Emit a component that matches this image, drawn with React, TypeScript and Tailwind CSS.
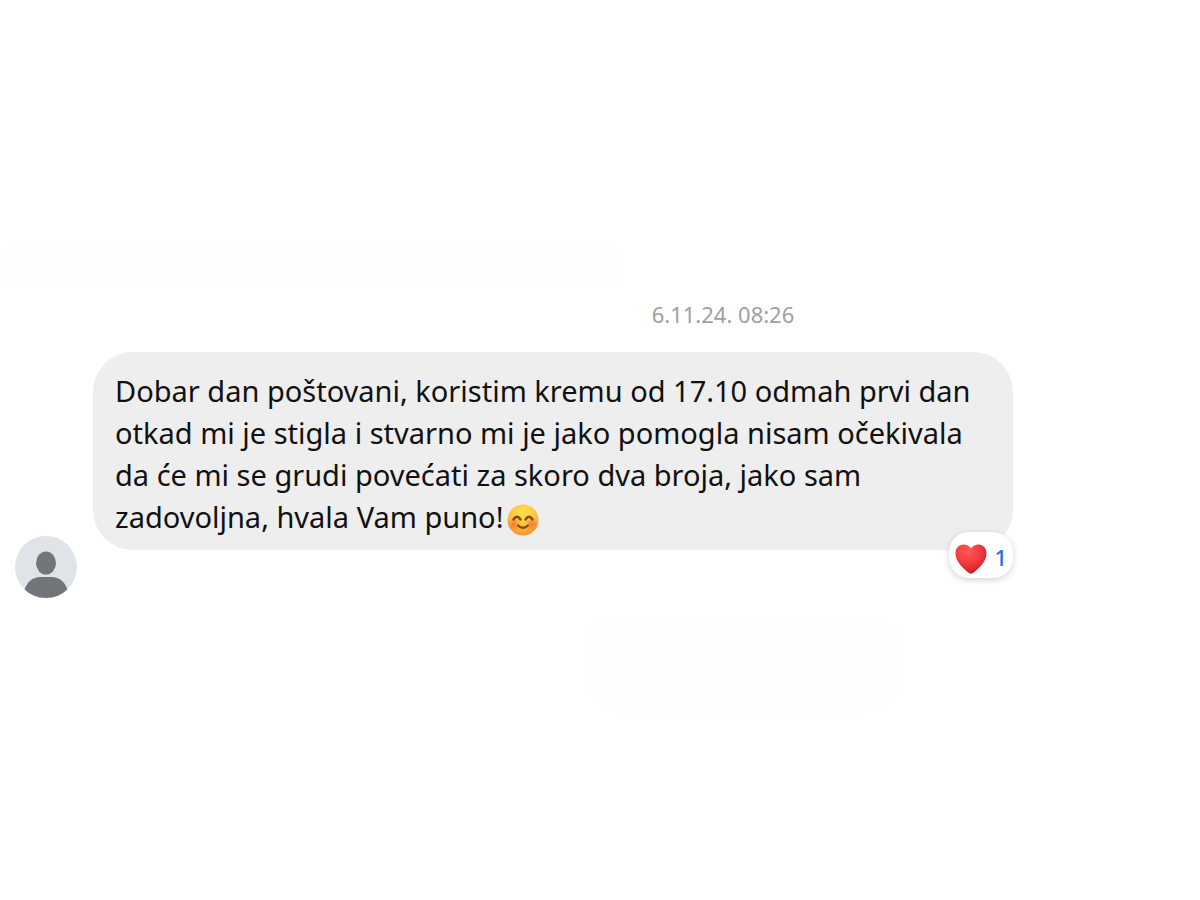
function Avatar() {
  return (
    <svg viewBox="0 0 62 62" className="size-[62px] shrink-0" role="img" aria-label="Avatar">
      <defs>
        <clipPath id="avatar-clip">
          <circle cx="31" cy="31" r="31" />
        </clipPath>
      </defs>
      <g clipPath="url(#avatar-clip)">
        <rect width="62" height="62" fill="#e0e4e9" />
        <ellipse cx="31" cy="27" rx="10" ry="11.5" fill="#72767b" />
        <path d="M9 56C11 46 18 41 25 41H37C44 41 51 46 53 56V62H9Z" fill="#72767b" />
      </g>
    </svg>
  );
}

function SmileEmoji() {
  return (
    <svg viewBox="0 0 32 32" className="ml-1 inline-block size-8 align-[-8px]" role="img" aria-label="Smile">
      <defs>
        <radialGradient id="face" cx="0.5" cy="0.25" r="0.8">
          <stop offset="0" stopColor="#ffe14d" />
          <stop offset="0.55" stopColor="#fdc23c" />
          <stop offset="1" stopColor="#f08a34" />
        </radialGradient>
        <radialGradient id="blush">
          <stop offset="0" stopColor="#fb7038" stopOpacity="0.9" />
          <stop offset="1" stopColor="#fb7038" stopOpacity="0" />
        </radialGradient>
      </defs>
      <circle cx="16" cy="16" r="15.5" fill="url(#face)" />
      <circle cx="7" cy="20" r="7" fill="url(#blush)" />
      <circle cx="25" cy="20" r="7" fill="url(#blush)" />
      <g fill="none" stroke="#7a4a1c" strokeLinecap="round">
        <path d="M6.5 15.5Q10 10 13.5 15.5" strokeWidth="2.4" />
        <path d="M18.5 15.5Q22 10 25.5 15.5" strokeWidth="2.4" />
        <path d="M11 21.5Q16 26 21 21.5" strokeWidth="2.2" />
      </g>
    </svg>
  );
}

function HeartEmoji() {
  return (
    <svg viewBox="0 0 32 30" className="h-[30px] w-8" role="img" aria-label="Heart">
      <defs>
        <radialGradient id="heart" cx="0.4" cy="0.25" r="0.8">
          <stop offset="0" stopColor="#ff5c55" />
          <stop offset="0.5" stopColor="#f33b3e" />
          <stop offset="1" stopColor="#c01b2b" />
        </radialGradient>
      </defs>
      <path
        d="M16 4.5C14 1.5 11.5 0.5 8.5 0.5C4 0.5 0.5 4 0.5 9.5C0.5 17 7 23.5 14 29Q16 30.5 18 29C25 23.5 31.5 17 31.5 9.5C31.5 4 28 0.5 23.5 0.5C20.5 0.5 18 1.5 16 4.5Z"
        fill="url(#heart)"
      />
    </svg>
  );
}

function Reaction() {
  return (
    <button
      type="button"
      className="absolute -bottom-7 right-0 flex h-[46px] w-16 items-center justify-between rounded-[20px] bg-white pt-2 pr-1.5 pl-1.5 shadow-[0_2px_6px_rgba(0,0,0,0.18)]"
    >
      <HeartEmoji />
      <span className="pb-1 text-[22px] leading-7 font-medium text-[#1b74e4]">1</span>
    </button>
  );
}

export default function App() {
  return (
    <main className="min-h-screen bg-white pt-[242px] font-['Noto_Sans',sans-serif]">
      <div className="mr-auto h-10 w-[52%] rounded-t-3xl bg-[#fefefe]" />
      <p className="mt-4 pl-[246px] text-center text-[22px] leading-8 text-[#a0a0a0]">
        <time dateTime="2024-11-06T08:26">6.11.24. 08:26</time>
      </p>
      <div className="mt-[22px] flex items-end gap-4 pr-[187px] pl-[15px]">
        <Avatar />
        <div className="relative mb-12 flex-1 rounded-[40px] bg-[#eeeeee] pt-[18px] pr-6 pb-3 pl-[22px]">
          <p className="text-[29px] leading-[42px] text-[#111111]">
            Dobar dan poštovani, koristim kremu od 17.10 odmah prvi dan otkad mi je stigla i stvarno mi je jako
            pomogla nisam očekivala da će mi se grudi povećati za skoro dva broja, jako sam zadovoljna, hvala Vam
            puno!
            <SmileEmoji />
          </p>
          <Reaction />
        </div>
      </div>
      <div className="mt-6 mr-[297px] ml-auto h-[92px] w-[320px] rounded-t-2xl rounded-b-[40px] bg-[#fefefe]" />
    </main>
  );
}
